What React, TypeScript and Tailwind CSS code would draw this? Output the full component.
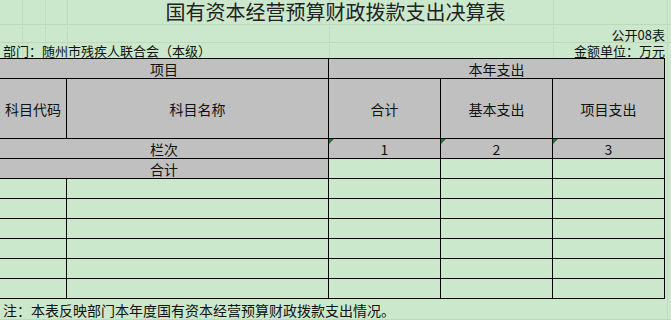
import React from "react";

const font = { fontFamily: '"Noto Sans CJK SC", "Noto Sans", sans-serif' };

function Tri() {
  return (
    <span className="absolute left-0 top-0 w-0 h-0 border-t-[5px] border-t-[#1f7a2a] border-r-[5px] border-r-transparent" />
  );
}

export default function App() {
  const cell = "border-r border-b border-black flex items-center justify-center relative";
  const gray = "bg-[#c0c0c0]";
  const rows = Array.from({ length: 6 });
  return (
    <div className="w-[671px] h-[320px] bg-[#cce8cc] text-[#111] overflow-hidden relative" style={font}>
      {/* faint excel gridlines */}
      <div className="absolute left-0 right-0 top-[24px] h-px bg-[#bcd9bc]" />
      <div className="absolute left-0 right-0 top-[42px] h-px bg-[#bcd9bc]" />
      <div className="absolute top-0 h-[58px] left-[22px] w-px bg-[#bfdcbf]" />
      <div className="absolute top-0 h-[58px] left-[45px] w-px bg-[#bfdcbf]" />
      <div className="absolute top-0 h-[58px] left-[67px] w-px bg-[#bfdcbf]" />
      <div className="absolute top-0 h-[58px] left-[329px] w-px bg-[#bfdcbf]" />
      <div className="absolute top-0 h-[58px] left-[553px] w-px bg-[#bfdcbf]" />
      <div className="absolute top-0 bottom-0 left-[667px] w-px bg-[#bfdcbf]" />
      <div className="absolute left-0 right-0 top-[319px] h-px bg-[#bcd9bc]" />

      <div className="relative">
        <div className="h-[24px] flex items-center justify-center text-[20px] leading-[24px] text-[#222]">
          国有资本经营预算财政拨款支出决算表
        </div>
        <div className="h-[18px] flex items-center justify-end pr-[6px] pt-[3px] text-[13px] leading-[15px]">
          公开08表
        </div>
        <div className="h-[16px] flex items-center justify-between pl-[3px] pr-[6px] text-[13px] leading-[15px]">
          <span>部门：随州市残疾人联合会（本级）</span>
          <span>金额单位：万元</span>
        </div>

        <div
          className="grid w-[665px] border-t border-black text-[14px] leading-none"
          style={{
            gridTemplateColumns: "67px 262px 112px 112px 112px",
            gridTemplateRows: "20px 60px 20px 20px repeat(6, 20px)",
          }}
        >
          <div className={`${cell} ${gray} col-span-2`}>项目</div>
          <div className={`${cell} ${gray} col-span-3`}>本年支出</div>

          <div className={`${cell} ${gray}`}>科目代码</div>
          <div className={`${cell} ${gray}`}>科目名称</div>
          <div className={`${cell} ${gray}`}>合计</div>
          <div className={`${cell} ${gray}`}>基本支出</div>
          <div className={`${cell} ${gray}`}>项目支出</div>

          <div className={`${cell} ${gray} col-span-2`}>栏次</div>
          <div className={`${cell} ${gray}`}>
            <Tri />1
          </div>
          <div className={`${cell} ${gray}`}>
            <Tri />2
          </div>
          <div className={`${cell} ${gray}`}>
            <Tri />3
          </div>

          <div className={`${cell} ${gray} col-span-2`}>合计</div>
          <div className={cell}></div>
          <div className={cell}></div>
          <div className={cell}></div>

          {rows.map((_, i) => (
            <React.Fragment key={i}>
              <div className={cell}></div>
              <div className={cell}></div>
              <div className={cell}></div>
              <div className={cell}></div>
              <div className={cell}></div>
            </React.Fragment>
          ))}
        </div>

        <div className="h-[22px] flex items-center pl-[3px] text-[14px] leading-none">
          注：本表反映部门本年度国有资本经营预算财政拨款支出情况。
        </div>
      </div>
    </div>
  );
}
